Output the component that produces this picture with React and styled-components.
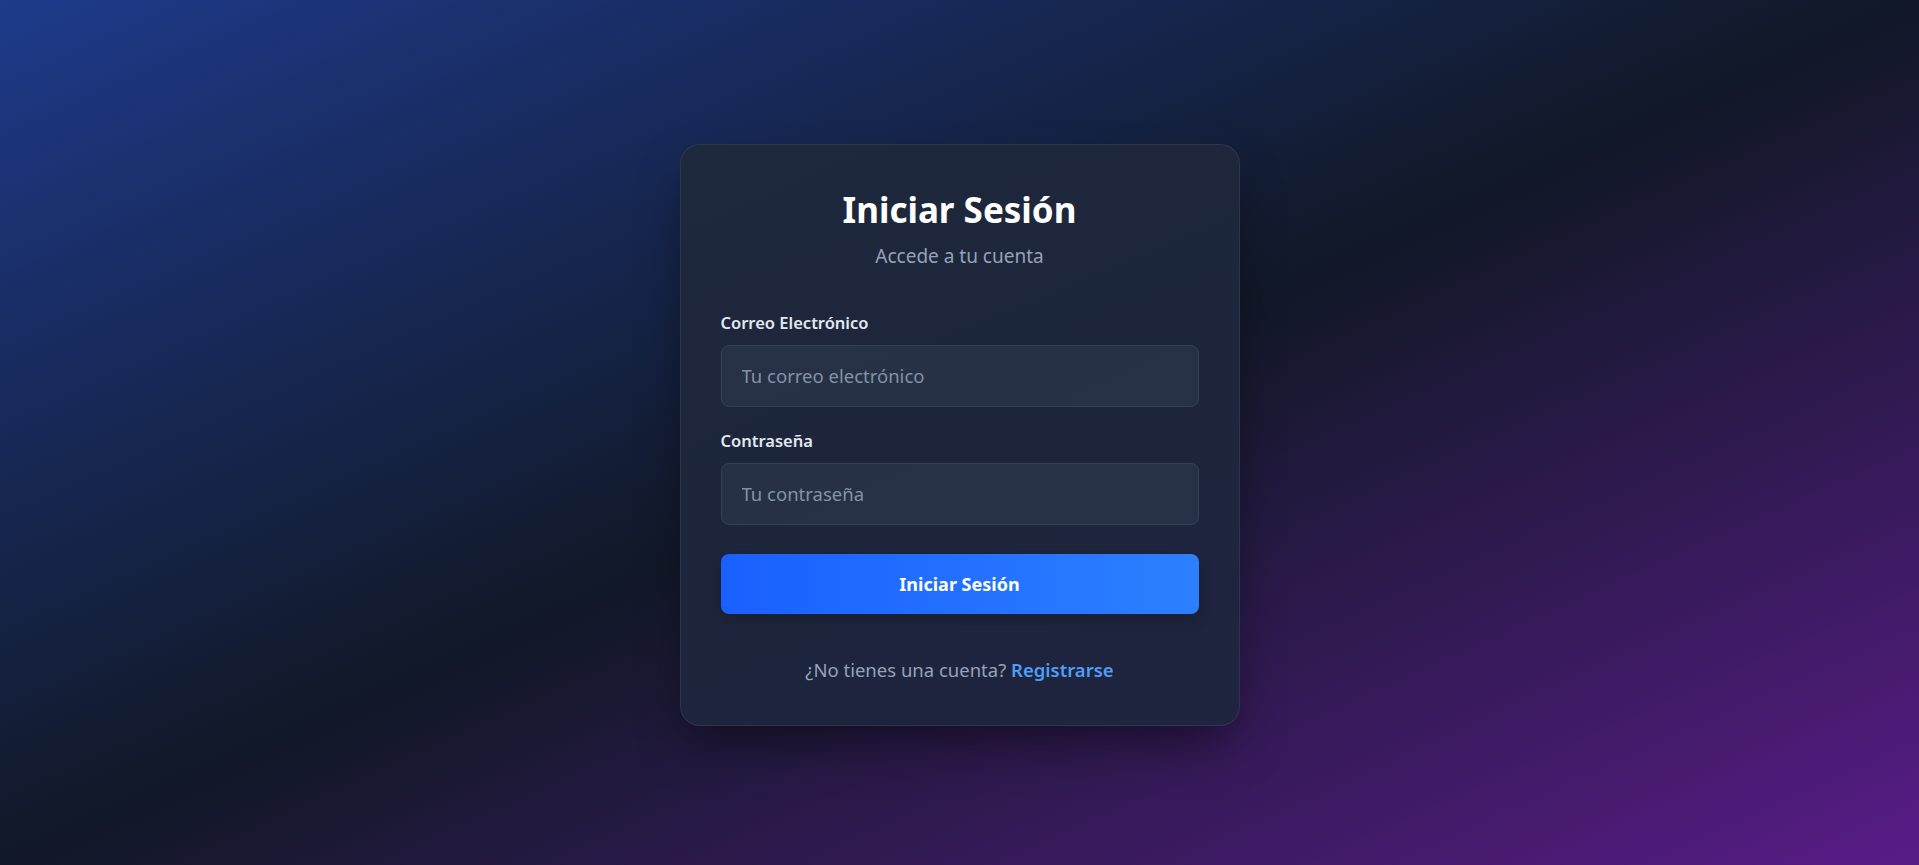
import React, { useState } from 'react';
import styled, { createGlobalStyle } from 'styled-components';

const GlobalStyle = createGlobalStyle`
  * {
    box-sizing: border-box;
  }
  html, body, #root {
    margin: 0;
    padding: 0;
    height: 100%;
  }
  body {
    font-family: 'Noto Sans', 'Open Sans', sans-serif;
  }
`;

const Login = () => {
  const [email, setEmail] = useState('');
  const [password, setPassword] = useState('');

  const onSubmitHandler = (e) => {
    e.preventDefault();
  };

  return (
    <StPage>
      <GlobalStyle />
      <StCard onSubmit={onSubmitHandler}>
        <CardHeader>
          <Title>Iniciar Sesión</Title>
          <Subtitle>Accede a tu cuenta</Subtitle>
        </CardHeader>
        <FormGroup>
          <Label htmlFor='email'>Correo Electrónico</Label>
          <Input
            id='email'
            type='email'
            placeholder='Tu correo electrónico'
            value={email}
            onChange={(e) => setEmail(e.target.value)}
          />
        </FormGroup>
        <FormGroup>
          <Label htmlFor='password'>Contraseña</Label>
          <Input
            id='password'
            type='password'
            placeholder='Tu contraseña'
            value={password}
            onChange={(e) => setPassword(e.target.value)}
          />
        </FormGroup>
        <SubmitButton type='submit'>Iniciar Sesión</SubmitButton>
        <Footer>
          ¿No tienes una cuenta? <FooterLink href='#'>Registrarse</FooterLink>
        </Footer>
      </StCard>
    </StPage>
  );
};

export default Login;

const StPage = styled.div`
  min-height: 100vh;
  padding-top: 4px;
  display: flex;
  align-items: center;
  justify-content: center;
  background: linear-gradient(to bottom right, #1e3a8a 0%, #111827 50%, #581c87 100%);
`;

const StCard = styled.form`
  width: 560px;
  padding: 40px;
  background: linear-gradient(160deg, rgba(30, 41, 59, 0.95), rgba(30, 36, 62, 0.95));
  border: 1px solid rgba(71, 85, 105, 0.35);
  border-radius: 20px;
  box-shadow: 0 25px 50px -12px rgba(0, 0, 0, 0.5);
`;

const CardHeader = styled.div`
  text-align: center;
  margin-bottom: 45px;
`;

const Title = styled.h1`
  margin: 2px 0 12px;
  font-size: 35px;
  line-height: 45px;
  font-weight: 700;
  color: #ffffff;
`;

const Subtitle = styled.p`
  margin: 0;
  font-size: 19px;
  line-height: 24px;
  color: #94a3b8;
`;

const FormGroup = styled.div`
  margin-bottom: 24px;
`;

const Label = styled.label`
  display: block;
  margin-bottom: 12px;
  font-size: 16.5px;
  line-height: 20px;
  font-weight: 600;
  color: #e2e8f0;
`;

const Input = styled.input`
  width: 100%;
  height: 62px;
  padding: 0 20px;
  font-family: inherit;
  font-size: 18.5px;
  color: #e2e8f0;
  background: rgba(51, 65, 85, 0.45);
  border: 1px solid #334155;
  border-radius: 8px;
  outline: none;

  &::placeholder {
    color: #8391a7;
  }
`;

const SubmitButton = styled.button`
  width: 100%;
  height: 60px;
  margin-top: 5px;
  font-family: inherit;
  font-size: 18px;
  font-weight: 700;
  color: #ffffff;
  background: linear-gradient(90deg, #1a60ff, #2c80ff);
  border: none;
  border-radius: 8px;
  box-shadow: 0 4px 14px rgba(0, 0, 0, 0.2);
  cursor: pointer;
`;

const Footer = styled.p`
  margin: 43px 0 2px;
  text-align: center;
  font-size: 18.5px;
  line-height: 26px;
  color: #94a3b8;
`;

const FooterLink = styled.a`
  color: #4d9ef7;
  font-weight: 600;
  text-decoration: none;
`;
